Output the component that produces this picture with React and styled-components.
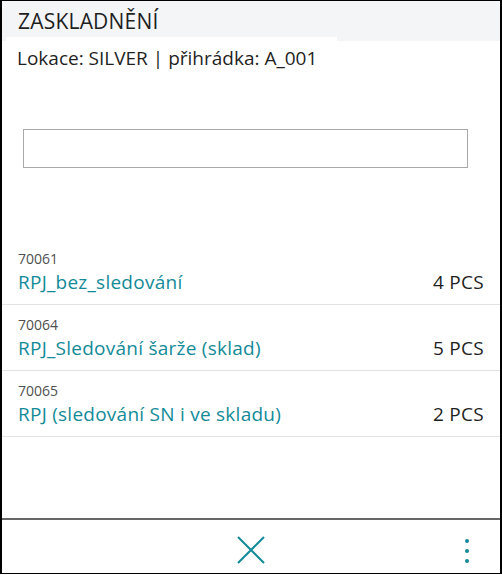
import styled, { createGlobalStyle } from 'styled-components';

const GlobalStyle = createGlobalStyle`
  html, body {
    margin: 0;
    padding: 0;
    background: #fff;
  }
  body {
    font-family: "Open Sans", "Noto Sans", sans-serif;
  }
`;

const items = [
  { no: '70061', name: 'RPJ_bez_sledování', qty: '4 PCS' },
  { no: '70064', name: 'RPJ_Sledování šarže (sklad)', qty: '5 PCS' },
  { no: '70065', name: 'RPJ (sledování SN i ve skladu)', qty: '2 PCS' },
];

function App() {
  return (
    <>
      <GlobalStyle />
      <Frame>
        <Header>
          <Title>ZASKLADNĚNÍ</Title>
        </Header>
        <Location>Lokace: SILVER | přihrádka: A_001</Location>
        <SearchWrap>
          <Search type="text" />
        </SearchWrap>
        <List>
          {items.map((item) => (
            <Row key={item.no}>
              <Info>
                <Code>{item.no}</Code>
                <Name>{item.name}</Name>
              </Info>
              <Qty>{item.qty}</Qty>
            </Row>
          ))}
        </List>
        <Footer>
          <IconButton aria-label="close">
            <svg width="28" height="28" viewBox="0 0 28 28">
              <path d="M1 1 L27 27 M27 1 L1 27" stroke="#138a98" strokeWidth="2" fill="none" />
            </svg>
          </IconButton>
          <MoreButton aria-label="more">
            <svg width="6" height="26" viewBox="0 0 6 26">
              <circle cx="3" cy="3" r="2" fill="#138a98" />
              <circle cx="3" cy="13" r="2" fill="#138a98" />
              <circle cx="3" cy="23" r="2" fill="#138a98" />
            </svg>
          </MoreButton>
        </Footer>
      </Frame>
    </>
  );
}

const Frame = styled.div`
  box-sizing: border-box;
  width: 502px;
  height: 574px;
  border-style: solid;
  border-color: #000;
  border-width: 1px 2px 1px 2px;
  display: flex;
  flex-direction: column;
  background: #fff;
`;

const Header = styled.div`
  height: 40px;
  background: #f4f5f7;
  padding-left: 16px;
  display: flex;
  align-items: center;
`;

const Title = styled.h1`
  margin: 0;
  font-size: 21px;
  font-weight: 400;
  color: #1f1f1f;
  letter-spacing: 0.2px;
`;

const Location = styled.div`
  align-self: flex-start;
  margin: -4px 0 0 4px;
  width: 331px;
  box-sizing: border-box;
  padding: 8px 0 0 11px;
  background: #fff;
  font-size: 19px;
  color: #1f1f1f;
  letter-spacing: 0;
  height: 36px;
`;

const SearchWrap = styled.div`
  padding: 56px 32px 0 21px;
`;

const Search = styled.input`
  box-sizing: border-box;
  width: 100%;
  height: 39px;
  border: 1px solid #a8a8a8;
  outline: none;
  font-family: inherit;
  font-size: 16px;
`;

const List = styled.div`
  margin-top: 71px;
  flex: 1;
`;

const Row = styled.div`
  height: 66px;
  box-sizing: border-box;
  border-bottom: 1px solid #e3e3e3;
  display: flex;
  align-items: flex-end;
  justify-content: space-between;
  padding: 0 16px 8px 16px;
`;

const Info = styled.div`
  display: flex;
  flex-direction: column;
`;

const Code = styled.span`
  font-size: 14px;
  color: #505050;
  line-height: 20px;
`;

const Name = styled.span`
  font-size: 19px;
  color: #138a98;
  line-height: 27px;
  letter-spacing: 0.25px;
`;

const Qty = styled.span`
  font-size: 19px;
  color: #1f1f1f;
  line-height: 27px;
  letter-spacing: 0.3px;
`;

const Footer = styled.div`
  height: 55px;
  border-top: 2px solid #666;
  box-sizing: border-box;
  display: flex;
  align-items: center;
  justify-content: center;
  position: relative;
`;

const IconButton = styled.button`
  background: none;
  border: none;
  padding: 0;
  display: flex;
  margin-top: 6px;
  cursor: pointer;
`;

const MoreButton = styled.button`
  position: absolute;
  right: 30px;
  top: 18px;
  background: none;
  border: none;
  padding: 0;
  display: flex;
  cursor: pointer;
`;

export default App;
